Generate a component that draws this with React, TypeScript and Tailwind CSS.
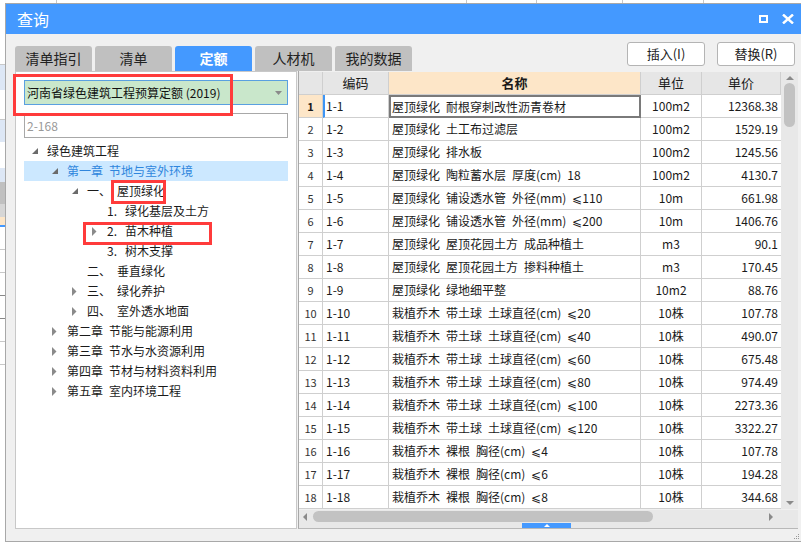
import React from 'react'

type Row = [string, string, string, string]

const rows: Row[] = [
  ['1-1', '屋顶绿化 耐根穿刺改性沥青卷材', '100m2', '12368.38'],
  ['1-2', '屋顶绿化 土工布过滤层', '100m2', '1529.19'],
  ['1-3', '屋顶绿化 排水板', '100m2', '1245.56'],
  ['1-4', '屋顶绿化 陶粒蓄水层 厚度(cm) 18', '100m2', '4130.7'],
  ['1-5', '屋顶绿化 铺设透水管 外径(mm) ⩽110', '10m', '661.98'],
  ['1-6', '屋顶绿化 铺设透水管 外径(mm) ⩽200', '10m', '1406.76'],
  ['1-7', '屋顶绿化 屋顶花园土方 成品种植土', 'm3', '90.1'],
  ['1-8', '屋顶绿化 屋顶花园土方 掺料种植土', 'm3', '170.45'],
  ['1-9', '屋顶绿化 绿地细平整', '10m2', '88.76'],
  ['1-10', '栽植乔木 带土球 土球直径(cm) ⩽20', '10株', '107.78'],
  ['1-11', '栽植乔木 带土球 土球直径(cm) ⩽40', '10株', '490.07'],
  ['1-12', '栽植乔木 带土球 土球直径(cm) ⩽60', '10株', '675.48'],
  ['1-13', '栽植乔木 带土球 土球直径(cm) ⩽80', '10株', '974.49'],
  ['1-14', '栽植乔木 带土球 土球直径(cm) ⩽100', '10株', '2273.36'],
  ['1-15', '栽植乔木 带土球 土球直径(cm) ⩽120', '10株', '3322.27'],
  ['1-16', '栽植乔木 裸根 胸径(cm) ⩽4', '10株', '107.78'],
  ['1-17', '栽植乔木 裸根 胸径(cm) ⩽6', '10株', '194.28'],
  ['1-18', '栽植乔木 裸根 胸径(cm) ⩽8', '10株', '344.68'],
]

interface Node {
  level: number
  icon: 'open' | 'closed' | 'none'
  prefix?: string
  label: string
  active?: boolean
}

const tree: Node[] = [
  { level: 0, icon: 'open', label: '绿色建筑工程' },
  { level: 1, icon: 'open', prefix: '第一章', label: '节地与室外环境', active: true },
  { level: 2, icon: 'open', prefix: '一、', label: '屋顶绿化' },
  { level: 3, icon: 'none', prefix: '1.', label: '绿化基层及土方' },
  { level: 3, icon: 'closed', prefix: '2.', label: '苗木种植' },
  { level: 3, icon: 'none', prefix: '3.', label: '树木支撑' },
  { level: 2, icon: 'none', prefix: '二、', label: '垂直绿化' },
  { level: 2, icon: 'closed', prefix: '三、', label: '绿化养护' },
  { level: 2, icon: 'closed', prefix: '四、', label: '室外透水地面' },
  { level: 1, icon: 'closed', prefix: '第二章', label: '节能与能源利用' },
  { level: 1, icon: 'closed', prefix: '第三章', label: '节水与水资源利用' },
  { level: 1, icon: 'closed', prefix: '第四章', label: '节材与材料资料利用' },
  { level: 1, icon: 'closed', prefix: '第五章', label: '室内环境工程' },
]

const tabs = ['清单指引', '清单', '定额', '人材机', '我的数据']

const prefixWidth = ['', 'w-[42px]', 'w-[30px]', 'w-[18px]']

// the grid in the reference leaves a wider gap between words
const spaced = (s: string) => s.replace(/ /g, '\u2002')

const TreeIcon = ({ kind }: { kind: Node['icon'] }) => {
  if (kind === 'open')
    return (
      <svg width="7" height="7" viewBox="0 0 7 7">
        <polygon points="6,0 6,6 0,6" fill="#6b6b6b" />
      </svg>
    )
  if (kind === 'closed')
    return (
      <svg width="5" height="9" viewBox="0 0 5 9">
        <polygon points="0,0 4.5,4.5 0,9" fill="#8a8a8a" />
      </svg>
    )
  return null
}

const App = () => {
  return (
    <div className="w-[801px] h-[546px] overflow-hidden bg-white flex flex-col font-['Noto_Sans_CJK_SC',sans-serif] text-[#1a1a1a]">
      {/* app behind the dialog */}
      <div className="h-[3px] flex shrink-0 bg-white">
        <div className="w-[57px] border-r border-[#c8c8c8]" />
        <div className="w-[410px] border-r border-[#c8c8c8]" />
        <div className="w-[70px] border-r border-[#c8c8c8]" />
        <div className="w-[86px] border-r border-[#c8c8c8]" />
        <div className="w-[81px] border-r border-[#c8c8c8]" />
        <div className="flex-1" />
      </div>

      <div className="flex flex-1 min-h-0">
        <div className="w-[5px] flex flex-col shrink-0">
          <div className="h-[62px] bg-white border-b border-[#c8c8c8]" />
          <div className="h-[25px] bg-[#dde7f5]" />
          <div className="h-[30px] bg-white border-b border-[#c8c8c8]" />
          <div className="h-[22px] bg-[#dde7f5]" />
          <div className="h-[26px] bg-white" />
          <div className="h-[14px] bg-[#dde7f5]" />
          <div className="h-[22px] bg-[#c0c0c0]" />
          <div className="h-[13px] bg-[#d6d6d6]" />
          <div className="h-[10px] bg-[#fde6c8] border-b-2 border-[#4499ff]" />
          <div className="h-[23px] bg-white border-b border-[#c8c8c8]" />
          <div className="h-[23px] bg-white border-b border-[#c8c8c8]" />
          <div className="h-[23px] bg-white border-b border-[#888]" />
          <div className="h-[23px] bg-white border-b border-[#888]" />
          <div className="h-[23px] bg-white border-b border-[#c8c8c8]" />
          <div className="h-[23px] bg-white border-b border-[#c8c8c8]" />
          <div className="flex-1 bg-white" />
        </div>

        <div className="flex-1 flex flex-col">
          <div className="h-[539px] flex flex-col bg-[#f0f0f0] border-l border-t border-b border-[#a8a8a8] relative">
            {/* title bar */}
            <div className="h-[30px] bg-[#4499ff] flex items-center justify-between pl-[11px] pr-[7px] shrink-0">
              <span className="text-white text-[16px] leading-none">查询</span>
              <div className="flex items-center gap-[14px]">
                <div className="w-[9px] h-[8px] border-2 border-white" />
                <svg width="12" height="10" viewBox="0 0 12 10">
                  <path d="M1 0.5 L11 9.5 M11 0.5 L1 9.5" stroke="#fff" strokeWidth="2.4" />
                </svg>
              </div>
            </div>

            {/* tabs + buttons */}
            <div className="h-[37px] flex justify-between pl-[9px] pr-[6px] shrink-0">
              <div className="flex gap-[3px] pt-[12px]">
                {tabs.map((t) => (
                  <div
                    key={t}
                    className={
                      t === '定额'
                        ? 'w-[77px] h-[25px] rounded-t-[3px] bg-[#4499ff] text-white font-bold text-[14px] flex items-center justify-center'
                        : 'w-[77px] h-[25px] rounded-t-[3px] bg-[#c0c0c0] text-[#222] text-[14px] flex items-center justify-center'
                    }
                  >
                    {t}
                  </div>
                ))}
              </div>
              <div className="flex gap-[12px] pt-[8px]">
                <button className="w-[78px] h-[24px] bg-white border border-[#b4b4b4] rounded-[3px] text-[13px] text-[#222]">
                  插入(I)
                </button>
                <button className="w-[78px] h-[24px] bg-white border border-[#b4b4b4] rounded-[3px] text-[13px] text-[#222]">
                  替换(R)
                </button>
              </div>
            </div>

            {/* content */}
            <div className="flex pl-[9px] gap-[1px]">
              {/* left tree panel */}
              <div className="relative w-[282px] h-[458px] bg-white border border-[#c8c8c8] px-[8px] pt-[8px]">
                <div className="h-[25px] bg-[#c9e7cb] border border-[#5aa0e0] flex items-center justify-between pl-[2px] pr-[5px]">
                  <span className="text-[12px] text-[#111]">河南省绿色建筑工程预算定额 (2019)</span>
                  <svg width="7" height="4" viewBox="0 0 7 4">
                    <polygon points="0,0 7,0 3.5,4" fill="#8a8a8a" />
                  </svg>
                </div>
                <div className="h-[25px] mt-[8px] bg-white border border-[#a8a8a8] flex items-center pl-[2px] text-[12px] text-[#999]">
                  2-168
                </div>
                <div className="mt-[3px] flex flex-col">
                  {tree.map((n, i) => (
                    <div
                      key={i}
                      className={`h-[20px] flex items-center text-[12px] ${n.active ? 'bg-[#cce8ff] text-[#2f86dd]' : 'text-[#1a1a1a]'}`}
                      style={{ paddingLeft: 8 + 20 * n.level }}
                    >
                      <div className="w-[15px] flex items-center">
                        <TreeIcon kind={n.icon} />
                      </div>
                      {n.prefix && <span className={`${prefixWidth[n.level]} shrink-0`}>{n.prefix}</span>}
                      <span>{n.label}</span>
                    </div>
                  ))}
                </div>

                <div className="absolute left-[-3px] top-[2px] w-[220px] h-[42px] border-[3px] border-[#ff3b3b]" />
                <div className="absolute left-[95px] top-[108px] w-[55px] h-[24px] border-[3px] border-[#ff3b3b]" />
                <div className="absolute left-[67px] top-[150px] w-[129px] h-[23px] border-[3px] border-[#ff3b3b]" />
              </div>

              {/* right table panel */}
              <div className="w-[500px] h-[458px] flex flex-col border-l border-[#a8a8a8] border-b border-b-[#b8b8b8]">
                <div className="flex pt-[1px]">
                  <div className="w-[482px] grid grid-cols-[24px_66px_252px_61px_79px] text-[12px]">
                    <div className="h-[23px] bg-[#e6e6e6] border-r border-b border-[#cfcfcf]" />
                    <div className="h-[23px] bg-[#e6e6e6] border-r border-b border-[#cfcfcf] flex items-center justify-center text-[13px]">编码</div>
                    <div className="h-[23px] bg-[#fde6c8] border-r border-b border-[#cfcfcf] flex items-center justify-center text-[13px] font-bold">名称</div>
                    <div className="h-[23px] bg-[#e6e6e6] border-r border-b border-[#cfcfcf] flex items-center justify-center text-[13px]">单位</div>
                    <div className="h-[23px] bg-[#e6e6e6] border-r border-b border-[#cfcfcf] flex items-center justify-center text-[13px]">单价</div>
                    {rows.map((r, i) => (
                      <React.Fragment key={r[0]}>
                        <div
                          className={
                            i === 0
                              ? 'h-[23px] bg-[#fde6c8] border-r border-b border-[#cfcfcf] flex items-center justify-center text-[11px] font-bold'
                              : 'h-[23px] bg-white border-r border-b border-[#cfcfcf] flex items-center justify-center text-[11px] text-[#333]'
                          }
                        >
                          {i + 1}
                        </div>
                        <div
                          className={
                            i === 0
                              ? 'h-[23px] bg-white border-l-2 border-l-[#3d95f5] border-r border-b border-[#cfcfcf] flex items-center pl-[1px]'
                              : 'h-[23px] bg-white border-r border-b border-[#cfcfcf] flex items-center pl-[3px]'
                          }
                        >
                          {r[0]}
                        </div>
                        <div
                          className={
                            i === 0
                              ? 'h-[23px] bg-white border-2 border-[#7a7a7a] flex items-center pl-[1px] whitespace-pre overflow-hidden'
                              : 'h-[23px] bg-white border-r border-b border-[#cfcfcf] flex items-center pl-[3px] whitespace-pre overflow-hidden'
                          }
                        >
                          {spaced(r[1])}
                        </div>
                        <div className="h-[23px] bg-white border-r border-b border-[#cfcfcf] flex items-center justify-center">{r[2]}</div>
                        <div className="h-[23px] bg-white border-b border-[#cfcfcf] flex items-center justify-end pr-[3px]">{r[3]}</div>
                      </React.Fragment>
                    ))}
                  </div>

                  {/* vertical scrollbar */}
                  <div className="w-[17px] h-[437px] bg-[#e8e8e8] flex flex-col items-center justify-between py-[4px]">
                    <div className="flex flex-col items-center gap-[3px]">
                      <svg width="8" height="4" viewBox="0 0 8 4">
                        <polygon points="0,4 8,4 4,0" fill="#8a8a8a" />
                      </svg>
                      <div className="w-[11px] h-[44px] rounded-full bg-[#c2c2c2]" />
                    </div>
                    <svg width="8" height="4" viewBox="0 0 8 4">
                      <polygon points="0,0 8,0 4,4" fill="#8a8a8a" />
                    </svg>
                  </div>
                </div>

                {/* horizontal scrollbar */}
                <div className="h-[14px] flex mt-[1px]">
                  <div className="w-[495px] bg-[#e8e8e8] flex items-center px-[4px]">
                    <svg width="4" height="8" viewBox="0 0 4 8">
                      <polygon points="4,0 4,8 0,4" fill="#8a8a8a" />
                    </svg>
                    <div className="ml-[6px] w-[340px] h-[11px] rounded-full bg-[#c2c2c2]" />
                    <div className="flex-1" />
                    <svg width="4" height="8" viewBox="0 0 4 8" className="mr-[17px]">
                      <polygon points="0,0 0,8 4,4" fill="#8a8a8a" />
                    </svg>
                  </div>
                  <div className="flex-1 bg-[#e8e8e8]" />
                </div>
                <div className="h-[5px] flex bg-[#e8e8e8]">
                  <div className="ml-[223px] w-[49px] bg-[#4499ff] flex items-center justify-center">
                    <svg width="6" height="3" viewBox="0 0 6 3">
                      <polygon points="0,3 6,3 3,0" fill="#fff" />
                    </svg>
                  </div>
                </div>
              </div>
            </div>

            {/* resize grip */}
            <div className="absolute right-[2px] bottom-[2px] grid grid-cols-3 gap-[1px]">
              <span className="w-[1px] h-[1px]" />
              <span className="w-[1px] h-[1px]" />
              <span className="w-[1px] h-[1px] bg-[#999]" />
              <span className="w-[1px] h-[1px]" />
              <span className="w-[1px] h-[1px] bg-[#999]" />
              <span className="w-[1px] h-[1px] bg-[#999]" />
              <span className="w-[1px] h-[1px] bg-[#999]" />
              <span className="w-[1px] h-[1px] bg-[#999]" />
              <span className="w-[1px] h-[1px] bg-[#999]" />
            </div>
          </div>
        </div>
      </div>
    </div>
  )
}

export default App
